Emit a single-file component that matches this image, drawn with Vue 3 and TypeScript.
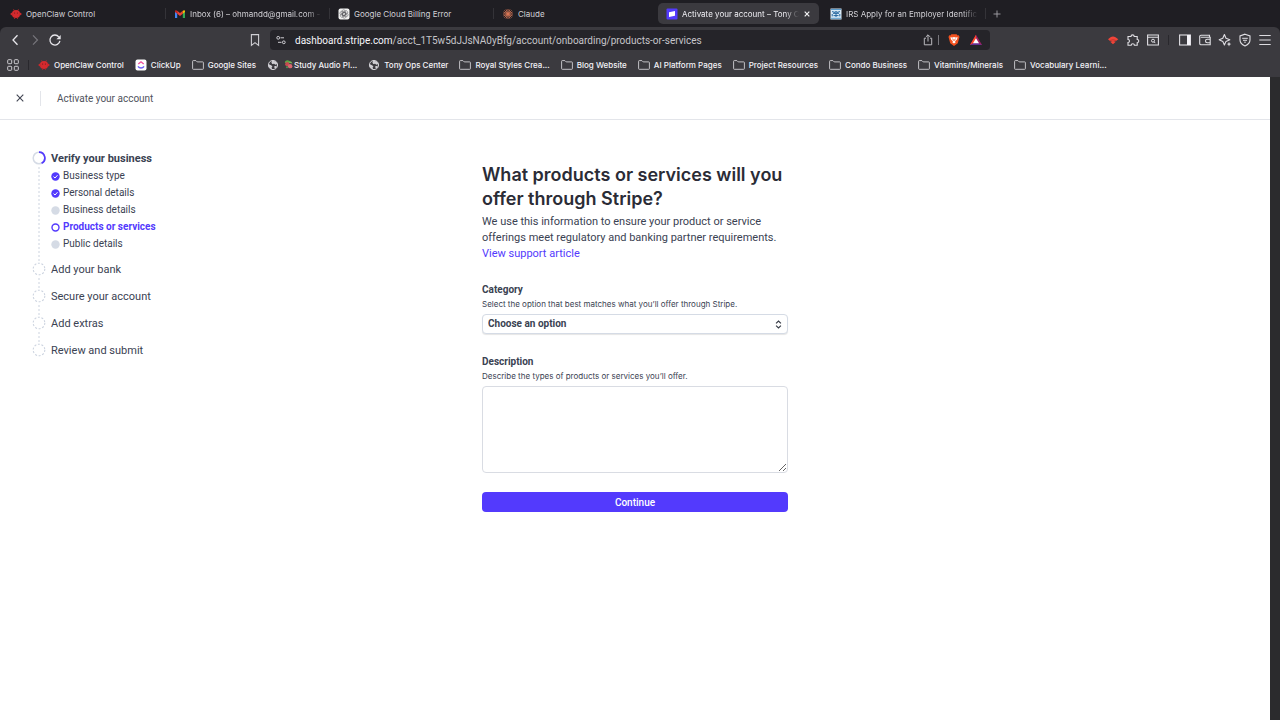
<script setup lang="ts">
import { ref } from 'vue'

interface Tab { title: string; icon: string; active?: boolean; fade?: boolean }
interface Bookmark { title: string; icon: string }
interface SubStep { title: string; state: 'done' | 'todo' | 'current' }

const tabs: Tab[] = [
  { title: 'OpenClaw Control', icon: 'claw' },
  { title: 'Inbox (6) – ohmandd@gmail.com -', icon: 'gmail', fade: true },
  { title: 'Google Cloud Billing Error', icon: 'gpt' },
  { title: 'Claude', icon: 'claude' },
  { title: 'Activate your account – Tony C', icon: 'stripe', active: true, fade: true },
  { title: 'IRS Apply for an Employer Identific', icon: 'irs', fade: true },
]

const bookmarks: Bookmark[] = [
  { title: 'OpenClaw Control', icon: 'claw' },
  { title: 'ClickUp', icon: 'clickup' },
  { title: 'Google Sites', icon: 'folder' },
  { title: 'Study Audio Pl...', icon: 'study' },
  { title: 'Tony Ops Center', icon: 'globe' },
  { title: 'Royal Styles Crea...', icon: 'folder' },
  { title: 'Blog Website', icon: 'folder' },
  { title: 'AI Platform Pages', icon: 'folder' },
  { title: 'Project Resources', icon: 'folder' },
  { title: 'Condo Business', icon: 'folder' },
  { title: 'Vitamins/Minerals', icon: 'folder' },
  { title: 'Vocabulary Learni...', icon: 'folder' },
]

const subSteps: SubStep[] = [
  { title: 'Business type', state: 'done' },
  { title: 'Personal details', state: 'done' },
  { title: 'Business details', state: 'todo' },
  { title: 'Products or services', state: 'current' },
  { title: 'Public details', state: 'todo' },
]

const laterSteps: string[] = ['Add your bank', 'Secure your account', 'Add extras', 'Review and submit']

const url = ref('/acct_1T5w5dJJsNA0yBfg/account/onboarding/products-or-services')
const category = ref('')
const description = ref('')
</script>

<template>
  <div class="window">
    <svg class="defs" aria-hidden="true">
      <symbol id="i-claw" viewBox="0 0 12 12">
        <path d="M3.4 1.2 4.4 2.5M8.6 1.2 7.6 2.5" stroke="#b3262a" stroke-width=".8" />
        <circle cx="6" cy="6" r="4.1" fill="#d42a2e" />
        <circle cx="1.7" cy="6" r="1.2" fill="#c8282c" /><circle cx="10.3" cy="6" r="1.2" fill="#c8282c" />
        <path d="M4.6 9.5v1.5M7.4 9.5v1.5" stroke="#a92226" stroke-width="1" />
        <circle cx="4.6" cy="4.9" r=".5" fill="#5c181b" /><circle cx="7.4" cy="4.9" r=".5" fill="#5c181b" />
      </symbol>
      <symbol id="i-gmail" viewBox="0 0 12 12">
        <path d="M1 10V3.2L3.2 4.9V10Z" fill="#4285f4" />
        <path d="M8.8 10V4.9L11 3.2V10Z" fill="#34a853" />
        <path d="M3.2 2.7 6 4.9 8.8 2.7V5.7L6 7.9 3.2 5.7Z" fill="#ea4335" />
        <path d="M1 3.2C1 2 2.3 1.9 3.2 2.7V5.7L1 4.1Z" fill="#c5221f" />
        <path d="M11 3.2C11 2 9.7 1.9 8.8 2.7V5.7L11 4.1Z" fill="#fbbc04" />
      </symbol>
      <symbol id="i-gpt" viewBox="0 0 12 12">
        <rect x=".5" y=".5" width="11" height="11" rx="2" fill="#f1f1f1" />
        <g fill="none" stroke="#55555a" stroke-width=".5">
          <rect x="4" y="1.8" width="3.4" height="5.8" rx="1.7" />
          <rect x="4" y="1.8" width="3.4" height="5.8" rx="1.7" transform="rotate(60 6 6)" />
          <rect x="4" y="1.8" width="3.4" height="5.8" rx="1.7" transform="rotate(120 6 6)" />
          <rect x="4" y="1.8" width="3.4" height="5.8" rx="1.7" transform="rotate(180 6 6)" />
          <rect x="4" y="1.8" width="3.4" height="5.8" rx="1.7" transform="rotate(240 6 6)" />
          <rect x="4" y="1.8" width="3.4" height="5.8" rx="1.7" transform="rotate(300 6 6)" />
        </g>
      </symbol>
      <symbol id="i-claude" viewBox="0 0 12 12">
        <path d="M6 1v10M1 6h10M2.4 2.4l7.2 7.2M9.6 2.4 2.4 9.6M4 1.4l4 9.2M8 1.4 4 10.6M1.4 4l9.2 4M1.4 8l9.2-4" stroke="#d97757" stroke-width=".8" />
      </symbol>
      <symbol id="i-stripe" viewBox="0 0 12 12">
        <rect x=".5" y=".5" width="11" height="11" rx="1" fill="#533afd" />
        <path d="M3 4.3 9 3v4.7L3 9Z" fill="#fff" />
      </symbol>
      <symbol id="i-irs" viewBox="0 0 12 12">
        <rect x=".5" y=".5" width="11" height="11" fill="#d9e9f5" />
        <path d="M1 1.5h10M1 10.3h10" stroke="#5a9bcb" stroke-width="1" />
        <path d="M2 3.6 5 4.4 6 3.2l1 1.2 3-.8M3 5.3h6M2.2 6v2.4M9.8 6v2.4M6 4v5M3.5 7.6h5" stroke="#22659e" stroke-width="1" fill="none" />
      </symbol>
      <symbol id="i-clickup" viewBox="0 0 12 12">
        <rect x=".5" y=".5" width="11" height="11" rx="2" fill="#fff" />
        <path d="M3.3 5 6 2.8 8.7 5" fill="none" stroke="#f0509e" stroke-width="1.4" />
        <path d="M3 7.3C4.5 9.6 7.5 9.6 9 7.3" fill="none" stroke="#6a5cf5" stroke-width="1.5" />
      </symbol>
      <symbol id="i-folder" viewBox="0 0 12 12">
        <path d="M.6 2.3q0-.7.7-.7h2.6l1.3 1.3h5.5q.7 0 .7.7v6q0 .7-.7.7H1.3q-.7 0-.7-.7Z" fill="none" stroke="#d0cfd4" stroke-width=".9" />
      </symbol>
      <symbol id="i-globe" viewBox="0 0 12 12">
        <circle cx="6" cy="6" r="4.6" fill="#3b3a3f" stroke="#cfced3" stroke-width="1" />
        <path d="M1.5 5 4 6.2 5.4 7.3 4.6 8.5 5.2 10.5 3 9.5 1.5 7.5ZM5 1.5 9 2.5 10.4 5 8.4 5.8 7.2 4.8 5.2 5 4.4 3.6ZM7.2 7.2 10 6.8 9 9 7.6 9.6Z" fill="#cfced3" />
      </symbol>
      <symbol id="i-fruit" viewBox="0 0 12 12">
        <path d="M2 4.3Q2 1.5 5 1.4L9 2.6 7.6 4.6Z" fill="#5fa345" />
        <circle cx="4.6" cy="5.7" r="2.3" fill="#c44a50" /><circle cx="7.8" cy="7.8" r="2.4" fill="#d96870" />
        <path d="m6 4 3-1 1.4 2Z" fill="#7fbd5d" /><circle cx="4.4" cy="9" r="1.2" fill="#4c8f52" />
      </symbol>
    </svg>

    <header class="chrome">
      <nav class="tabs" aria-label="Open tabs">
        <a v-for="tab in tabs" :key="tab.title" href="#" class="tab" :class="{ active: tab.active }">
          <svg class="favicon"><use :href="'#i-' + tab.icon" /></svg>
          <span class="tab-title" :class="{ fade: tab.fade }">{{ tab.title }}</span>
          <svg v-if="tab.active" class="tab-close" viewBox="0 0 8 8"><path d="m1.7 1.7 4.6 4.6m0-4.6L1.7 6.3" stroke="#f2f2f4" stroke-width="1.2" /></svg>
        </a>
        <button class="new-tab" aria-label="New tab">
          <svg viewBox="0 0 10 10"><path d="M5 1.5v7M1.5 5h7" stroke="#a4a3a8" stroke-width=".9" /></svg>
        </button>
      </nav>

      <div class="toolbar">
        <div class="tools">
          <button aria-label="Back"><svg viewBox="0 0 14 14"><path d="M9.5 2.3 5 7l4.5 4.7" fill="none" stroke="#e8e7ec" stroke-width="1.3" /></svg></button>
          <button aria-label="Forward"><svg viewBox="0 0 14 14"><path d="M5 2.3 9.5 7 5 11.7" fill="none" stroke="#77767c" stroke-width="1.2" /></svg></button>
          <button aria-label="Reload"><svg viewBox="0 0 14 14"><path d="M11.9 7.8A5 5 0 1 1 10.8 3.8" fill="none" stroke="#e8e7ec" stroke-width="1.3" /><path d="M12.7 2v4.3H8.4Z" fill="#e8e7ec" /></svg></button>
          <button class="save" aria-label="Bookmark this page"><svg viewBox="0 0 14 14"><path d="M3.4 1.6h7.2v10.8L7 9.6l-3.6 2.8Z" fill="none" stroke="#cfced3" stroke-width="1.1" /></svg></button>
        </div>
        <div class="address">
          <svg class="site" viewBox="0 0 12 12"><g fill="none" stroke="#cfced3" stroke-width="1"><circle cx="3.2" cy="3.8" r="1.4" /><path d="M5.5 3.8H9" /><circle cx="8.8" cy="8.3" r="1.4" /><path d="M3 8.3h3.5" /></g></svg>
          <div class="url"><span class="host">dashboard.stripe.com</span>{{ url }}</div>
          <div class="share">
            <button aria-label="Share"><svg viewBox="0 0 14 14"><path d="M5 5.2H3.3v6.6h7.4V5.2H9M7 8.5V1.9M4.9 3.9 7 1.8l2.1 2.1" fill="none" stroke="#bab9be" stroke-width="1" /></svg></button>
            <i class="bar" />
          </div>
          <button aria-label="Brave Shields"><svg viewBox="0 0 14 14"><path d="m4.4 1.3h5.2l1 1.1 1.2-.1.7 1.7-.4 1.2-1.3 5L7 13 3.2 10.2l-1.3-5L1.5 4l.7-1.7 1.2.1Z" fill="#f4511e" /><path d="m3.3 4.2 2.2.4L7 4.1l1.5.5 2.2-.4-.9 2.5L8 8.2l.7 1.1L7 10.5 5.3 9.3 6 8.2 4.2 6.7Z" fill="#fff" /><path d="m5 5.8 1.3.5L7 8l.7-1.7L9 5.8" fill="none" stroke="#f4511e" stroke-width=".6" /></svg></button>
          <button aria-label="Rewards"><svg viewBox="0 0 14 14"><path d="M7 1.7 13 12H1Z" fill="#9e1f63" /><path d="M7 1.7 1 12l6-3.6Z" fill="#ff4724" /><path d="M1 12h12L7 9Z" fill="#662d91" /><path d="m7 5.2 3 5H4Z" fill="#fff" /></svg></button>
        </div>
        <div class="tools right">
          <button aria-label="Extension"><svg viewBox="0 0 14 14"><path d="M2 6.2 4.5 4.2Q7 2.8 9.5 4.2L12.3 6.2 10 8H4Z" fill="#f04438" /><path d="M4.2 8.8Q7 7.4 9.8 8.8L7 11.3Z" fill="#f04438" /><path d="M3.8 7.6Q7 5.8 10.2 7.6" stroke="#a52a2a" stroke-width=".6" fill="none" /></svg></button>
          <button aria-label="Extensions"><svg viewBox="0 0 14 14"><path d="M2 3.5h3a1.6 1.6 0 1 1 3.2 0h3v3a1.6 1.6 0 1 1 0 3.2v2.6H8.4a1.6 1.6 0 0 0-3.2 0H2V9.5a1.5 1.5 0 0 0 0-3Z" fill="none" stroke="#e0dfe4" stroke-width="1.1" /></svg></button>
          <button aria-label="Search tabs"><svg viewBox="0 0 14 14"><path d="M1.6 2h10.8v10H1.6ZM1.6 4.2h10.8" fill="none" stroke="#e0dfe4" stroke-width="1.1" /><circle cx="7" cy="7.7" r="1.5" fill="none" stroke="#e0dfe4" stroke-width="1" /><path d="m8 8.8 1.3 1.3" stroke="#e0dfe4" /></svg></button>
          <i class="bar dim" />
          <button aria-label="Sidebar"><svg viewBox="0 0 14 14"><rect x="1.6" y="2" width="10.8" height="10" fill="none" stroke="#e0dfe4" stroke-width="1.1" /><path d="M9 2h3.4v10H9Z" fill="#f4f3f8" /></svg></button>
          <button aria-label="Wallet"><svg viewBox="0 0 14 14"><path d="M11.5 4.3V2.2H3q-1.3 0-1.3 1.1V10.5q0 1.3 1.3 1.3h9.2V4.3H2.8M12.3 6.3H9.2a1.7 1.7 0 0 0 0 3.4h3.1" fill="none" stroke="#e0dfe4" stroke-width="1.1" /></svg></button>
          <button aria-label="Assistant"><svg viewBox="0 0 14 14"><path d="M6.4 1.5 8 5.2 11.8 6.8 8 8.4 6.4 12 4.8 8.4 1.2 6.8 4.8 5.2Z" fill="none" stroke="#e0dfe4" stroke-width="1.1" stroke-linejoin="round" /><path d="m11 8.8.7 1.6 1.6.7-1.6.7-.7 1.6-.7-1.6-1.6-.7 1.6-.7Z" fill="#e0dfe4" /></svg></button>
          <button aria-label="VPN"><svg viewBox="0 0 14 14"><path d="M7 1.2 12 3v4q0 3.7-5 6-5-2.3-5-6V3Z" fill="none" stroke="#e0dfe4" stroke-width="1.1" /><path d="M4.2 5.3h5.6M5 7.3h4M6.2 9.2h1.6" stroke="#e0dfe4" stroke-width="1" /></svg></button>
          <button aria-label="Menu"><svg viewBox="0 0 14 14"><path d="M1.3 2.5h11.4M1.3 7h11.4M1.3 11.5h11.4" stroke="#dddce1" stroke-width="1.1" /></svg></button>
        </div>
      </div>

      <nav class="bookmarks" aria-label="Bookmarks">
        <button class="apps" aria-label="All bookmarks"><svg viewBox="0 0 12 12"><g fill="none" stroke="#cfced3" stroke-width="1"><rect x=".7" y=".7" width="4" height="4" rx=".8" /><rect x="7.3" y=".7" width="4" height="4" rx=".8" /><rect x=".7" y="7.3" width="4" height="4" rx=".8" /><rect x="7.3" y="7.3" width="4" height="4" rx=".8" /></g></svg></button>
        <i class="bar" />
        <a v-for="mark in bookmarks" :key="mark.title" href="#" class="bookmark">
          <svg class="favicon"><use :href="'#i-' + (mark.icon === 'study' ? 'globe' : mark.icon)" /></svg>
          <span class="mark-title"><svg v-if="mark.icon === 'study'" class="emoji"><use href="#i-fruit" /></svg>{{ mark.title }}</span>
        </a>
      </nav>
    </header>

    <div class="viewport">
      <div class="page">
        <header class="page-head">
          <button class="close" aria-label="Close"><svg viewBox="0 0 10 10"><path d="m1.7 1.7 6.6 6.6m0-6.6L1.7 8.3" stroke="#414552" stroke-width="1.1" /></svg></button>
          <span class="page-title">Activate your account</span>
        </header>

        <div class="content">
          <nav class="steps" aria-label="Progress">
            <section class="step current">
              <div class="rail">
                <svg class="ring" viewBox="0 0 14 14"><circle cx="7" cy="7" r="5.8" fill="none" stroke="#d5dbe5" stroke-width="1.5" /><path d="M7 1.2a5.8 5.8 0 0 1 2.6 11" fill="none" stroke="#533afd" stroke-width="1.7" /></svg>
                <svg class="dots"><line x1="1" y1="2" x2="1" y2="100%" /></svg>
              </div>
              <div class="step-body">
                <a href="#" class="step-name">Verify your business</a>
                <ul>
                  <li v-for="sub in subSteps" :key="sub.title" :class="sub.state">
                    <svg class="mark" viewBox="0 0 9 9">
                      <template v-if="sub.state === 'done'"><circle cx="4.5" cy="4.5" r="4.2" fill="#533afd" /><path d="m2.5 4.6 1.5 1.4 2.5-2.8" fill="none" stroke="#fff" stroke-width="1" /></template>
                      <circle v-else-if="sub.state === 'todo'" cx="4.5" cy="4.5" r="4.2" fill="#d5dbe5" />
                      <circle v-else cx="4.5" cy="4.5" r="3.5" fill="#fff" stroke="#533afd" stroke-width="1.4" />
                    </svg>
                    <a href="#">{{ sub.title }}</a>
                  </li>
                </ul>
              </div>
            </section>
            <section v-for="(name, index) in laterSteps" :key="name" class="step">
              <div class="rail">
                <svg class="ring" viewBox="0 0 14 14"><circle cx="7" cy="7" r="5.8" fill="none" stroke="#ccd3df" stroke-width="1.1" stroke-dasharray="2 1.64" /></svg>
                <svg v-if="index < laterSteps.length - 1" class="dots"><line x1="1" y1="2" x2="1" y2="100%" /></svg>
              </div>
              <a href="#" class="step-name">{{ name }}</a>
            </section>
          </nav>

          <main>
            <form @submit.prevent>
              <h1>What products or services will you offer through Stripe?</h1>
              <p class="intro">We use this information to ensure your product or service offerings meet regulatory and banking partner requirements. <a href="#">View support article</a></p>

              <div class="field">
                <label for="category">Category</label>
                <p id="category-help">Select the option that best matches what you’ll offer through Stripe.</p>
                <div class="select">
                  <select id="category" v-model="category" aria-describedby="category-help">
                    <option value="">Choose an option</option>
                  </select>
                  <svg viewBox="0 0 10 10"><path d="M2.3 3.8 5 1.2l2.7 2.6M2.3 6.2 5 8.8l2.7-2.6" fill="none" stroke="#353a44" stroke-width="1.3" /></svg>
                </div>
              </div>

              <div class="field">
                <label for="description">Description</label>
                <p id="description-help">Describe the types of products or services you’ll offer.</p>
                <textarea id="description" v-model="description" rows="5" aria-describedby="description-help" />
              </div>

              <button class="submit" type="submit">Continue</button>
            </form>
          </main>
        </div>
      </div>
    </div>
  </div>
</template>

<style>
body { margin: 0; background: #2b2b2d; }
</style>

<style scoped>
* { box-sizing: border-box; }
.window {
  display: flex; flex-direction: column; min-height: 100vh;
  font-family: Roboto, "Liberation Sans", sans-serif; color: #3a4252; background: #1f1e23;
}
.defs { position: absolute; width: 0; height: 0; }
a { color: inherit; text-decoration: none; }
button { border: 0; padding: 0; background: none; font: inherit; display: flex; }
svg { display: block; flex: none; }
.favicon { width: 12px; height: 12px; }

.chrome { color: #dddce1; }
.tabs { display: flex; align-items: center; height: 27px; padding-left: 2px; font-family: Inter, sans-serif; }
.tab {
  flex: 0 0 164px; min-width: 0; height: 21px; padding: 0 8px; display: flex; align-items: center; gap: 4px;
  font-size: 8px; color: #d2d1d6; position: relative;
}
.tab:not(.active)::after { content: ""; position: absolute; right: 0; top: 5px; width: 1px; height: 11px; background: #343338; }
.tab:nth-child(4)::after { display: none; }
.tab.active { flex-basis: 161px; margin: 0 3px 0 0; border-radius: 5px; background: #3b3a3f; color: #f0eff4; }
.tab-title { flex: 1; min-width: 0; overflow: hidden; white-space: nowrap; line-height: 12px; }
.fade { mask-image: linear-gradient(to right, #000 88%, transparent); }
.tab-close { width: 8px; height: 8px; }
.new-tab svg { width: 10px; height: 10px; margin-left: 6px; }

.toolbar {
  display: grid; grid-template-columns: 254px 1fr 274px; align-items: center; gap: 8px;
  height: 26px; padding: 0 8px; border-radius: 6px 6px 0 0; background: #3b3a3f;
}
.tools { display: flex; align-items: center; gap: 6px; }
.toolbar svg { width: 14px; height: 14px; }
.tools.right { justify-content: flex-end; }
.save { margin-left: auto; }
.bar { width: 1px; height: 10px; background: #77767c; }
.bar.dim { margin: 0 3px 0 2px; background: #29282d; }
.address { display: flex; align-items: center; gap: 8px; height: 20px; padding: 0 7px 0 5px; border-radius: 4px; background: #252429; }
.address .site { width: 12px; height: 12px; }
.share { display: flex; align-items: center; gap: 3px; }
.url { flex: 1; font-size: 10px; color: #c6c5ca; white-space: nowrap; }
.host { color: #f6f5fa; }

.bookmarks { display: flex; align-items: center; gap: 11px; height: 24px; padding: 0 0 1px 7px; background: #3b3a3f; font-family: Inter, sans-serif; font-size: 8px; font-weight: 500; color: #f4f3f8; }
.bookmarks .bar { margin: 0 -2px; background: #29282d; }
.bookmark, .mark-title { display: flex; align-items: center; white-space: nowrap; }
.bookmark { gap: 4px; }
.apps svg { width: 12px; height: 12px; }
.emoji { width: 11px; height: 11px; }

.viewport { flex: 1; display: flex; padding-right: 10px; background: #2b2b2d; }
.page { flex: 1; background: #fff; }
.page-head { display: flex; align-items: center; height: 43px; padding-left: 15px; border-bottom: 1px solid #e3e5ea; }
.close svg { width: 10px; height: 10px; }
.page-title { margin-left: 15px; padding-left: 16px; border-left: 1px solid #e3e5ea; font-size: 10px; line-height: 15px; color: #50535c; }

.content { display: grid; grid-template-columns: 1fr 306px 1fr; }
.steps { padding: 31px 0 0 32px; }
.step { display: flex; gap: 5px; min-height: 27px; font-size: 11px; line-height: 16px; }
.step.current { min-height: 111px; }
.rail { display: flex; flex-direction: column; align-items: center; width: 14px; }
.ring { width: 14px; height: 14px; }
.dots { flex: 1 1 0; width: 2px; height: 0; min-height: 0; }
.dots line { stroke: #ccd3df; stroke-width: 1; stroke-dasharray: 2 2; }
.current .step-name { font-weight: 700; }
ul { list-style: none; margin: 1px 0 0; padding: 0; font-size: 10px; }
li { display: flex; align-items: center; gap: 3px; height: 16px; margin-bottom: 1px; }
.mark { width: 9px; height: 9px; }
li.current { color: #533afd; font-weight: 700; }

main { padding-top: 43px; }
form { display: flex; flex-direction: column; }
h1 { margin: 0; font-family: Inter, sans-serif; font-size: 18px; line-height: 24px; font-weight: 600; color: #2b2c36; }
.intro { margin: 3px 0 19px; font-size: 11px; line-height: 16px; }
.intro a { display: block; color: #533afd; }
.field { display: flex; flex-direction: column; margin-bottom: 19px; }
label { font-size: 10px; line-height: 17px; font-weight: 700; }
.field p { margin: 0 0 3px; font-family: Inter, sans-serif; font-size: 8px; line-height: 13px; }
.select { display: grid; align-items: center; }
.select > * { grid-area: 1 / 1; }
.select svg { width: 9px; height: 9px; justify-self: end; margin-right: 5px; pointer-events: none; }
select {
  appearance: none; width: 100%; height: 20px; padding: 0 5px; border: 1px solid #d5dbe5; border-radius: 4px;
  background: #fff; box-shadow: 0 1px 1px #0000001a; font: 700 10px/16px Roboto, sans-serif; color: #3a4252;
}
textarea { width: 100%; height: 87px; padding: 4px 5px; border: 1px solid #d9dce3; border-radius: 4px; font: 10px/16px Roboto, sans-serif; resize: vertical; }
.submit { justify-content: center; align-items: center; height: 20px; border-radius: 4px; background: #533afd; color: #fff; font-size: 10px; font-weight: 500; }
</style>
